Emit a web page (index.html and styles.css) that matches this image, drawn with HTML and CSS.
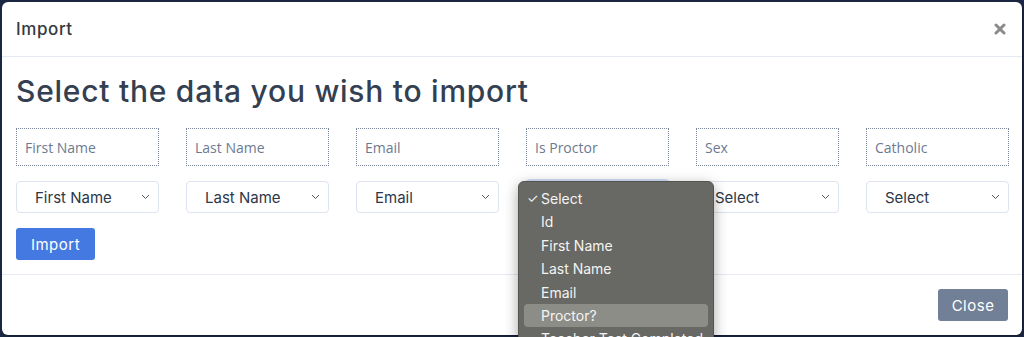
FILE: index.html
```html
<!DOCTYPE html>
<html lang="en">
<head>
    <meta charset="UTF-8">
    <meta name="viewport" content="width=device-width, initial-scale=1.0">
    <title>Import</title>
    <link rel="stylesheet" href="styles.css">
</head>
<body>
    <div class="modal">
        <div class="modal-header">
            <h5 class="modal-title">Import</h5>
            <button class="btn-close" aria-label="Close">
                <svg width="12" height="12" viewBox="0 0 12 12"><path d="M2 2 L10 10 M10 2 L2 10" stroke="#8a8a8a" stroke-width="3" stroke-linecap="round"/></svg>
            </button>
        </div>

        <div class="modal-body">
            <h2 class="title">Select the data you wish to import</h2>

            <div class="mapping">
                <input class="field" type="text" placeholder="First Name">
                <input class="field" type="text" placeholder="Last Name">
                <input class="field" type="text" placeholder="Email">
                <input class="field" type="text" placeholder="Is Proctor">
                <input class="field" type="text" placeholder="Sex">
                <input class="field" type="text" placeholder="Catholic">

                <div class="select"><span>First Name</span><svg class="chev" width="9" height="6" viewBox="0 0 9 6"><path d="M1 1 L4.5 4.5 L8 1" fill="none" stroke="#555" stroke-width="1"/></svg></div>
                <div class="select"><span>Last Name</span><svg class="chev" width="9" height="6" viewBox="0 0 9 6"><path d="M1 1 L4.5 4.5 L8 1" fill="none" stroke="#555" stroke-width="1"/></svg></div>
                <div class="select"><span>Email</span><svg class="chev" width="9" height="6" viewBox="0 0 9 6"><path d="M1 1 L4.5 4.5 L8 1" fill="none" stroke="#555" stroke-width="1"/></svg></div>
                <div class="select focused"><span>Select</span><svg class="chev" width="9" height="6" viewBox="0 0 9 6"><path d="M1 1 L4.5 4.5 L8 1" fill="none" stroke="#555" stroke-width="1"/></svg></div>
                <div class="select"><span>Select</span><svg class="chev" width="9" height="6" viewBox="0 0 9 6"><path d="M1 1 L4.5 4.5 L8 1" fill="none" stroke="#555" stroke-width="1"/></svg></div>
                <div class="select"><span>Select</span><svg class="chev" width="9" height="6" viewBox="0 0 9 6"><path d="M1 1 L4.5 4.5 L8 1" fill="none" stroke="#555" stroke-width="1"/></svg></div>
            </div>

            <button class="btn btn-primary">Import</button>
        </div>

        <div class="modal-footer">
            <button class="btn btn-secondary">Close</button>
        </div>

        <!-- menu aberto do select "Is Proctor" -->
        <ul class="dropdown">
            <li class="checked"><span class="check">✓</span>Select</li>
            <li>Id</li>
            <li>First Name</li>
            <li>Last Name</li>
            <li>Email</li>
            <li class="hover">Proctor?</li>
            <li>Teacher Test Completed</li>
        </ul>
    </div>
</body>
</html>
```

FILE: styles.css
```css
* {
    margin: 0;
    padding: 0;
    box-sizing: border-box;
}

body {
    background: #1c2843;
    height: 337px;
    overflow: hidden;
    padding: 2px 2px 0 2px;
    font-family: Inter, sans-serif;
    color: #2d3748;
}

/* Modal */
.modal {
    position: relative;
    background: #fff;
    border-radius: 6px;
    height: 333px;
    display: flex;
    flex-direction: column;
    box-shadow: 1px 1px 3px rgba(0, 0, 0, 0.4);
}

.modal-header {
    height: 55px;
    padding: 0 14px;
    display: flex;
    align-items: center;
    justify-content: space-between;
    border-bottom: 1px solid #e4e9f2;
}

.modal-title {
    font-size: 17px;
    font-weight: 500;
    letter-spacing: 0.6px;
    color: #343a40;
}

.btn-close {
    background: none;
    border: none;
    width: 12px;
    height: 12px;
    margin-right: 2px;
    display: flex;
}

/* Body */
.modal-body {
    padding: 16px 13px 14px 14px;
    border-bottom: 1px solid #e4e9f2;
}

.title {
    font-size: 30px;
    font-weight: 500;
    line-height: 36px;
    color: #343f52;
    letter-spacing: 0.75px;
    margin-bottom: 19px;
}

.mapping {
    display: grid;
    grid-template-columns: repeat(6, 143px);
    column-gap: 27px;
    row-gap: 15px;
    margin-bottom: 15px;
}

.field {
    height: 38px;
    border: 1px dotted #7d889c;
    padding: 0 8px;
    font-family: "Open Sans", sans-serif;
    font-size: 14px;
    outline: none;
}

.field::placeholder {
    color: #6c7a91;
}

.select {
    height: 32px;
    border: 1px solid #dde4f0;
    border-radius: 4px;
    padding: 0 8px 0 18px;
    display: flex;
    align-items: center;
    justify-content: space-between;
    font-size: 15px;
    color: #2d3748;
}

.select.focused {
    border-color: #a9c0ee;
    box-shadow: 0 0 0 2px rgba(68, 121, 224, 0.25);
}

/* Buttons */
.btn {
    border: none;
    border-radius: 3px;
    font-family: Inter, sans-serif;
    font-size: 15px;
    letter-spacing: 0.5px;
    color: #fff;
    height: 32px;
    cursor: pointer;
}

.btn-primary {
    background: #4479e1;
    width: 79px;
}

.btn-secondary {
    background: #718096;
    width: 70px;
}

.modal-footer {
    flex: 1;
    display: flex;
    justify-content: flex-end;
    align-items: flex-start;
    padding: 14px 14px 0 0;
}

/* Dropdown do sistema */
.dropdown {
    position: absolute;
    left: 516px;
    top: 179px;
    width: 196px;
    height: 170px;
    list-style: none;
    background: #686864;
    border: 1px solid #55554f;
    border-radius: 6px;
    padding: 5px 5px;
    box-shadow: 0 4px 14px rgba(0, 0, 0, 0.35);
    font-family: Inter, "Liberation Sans", sans-serif;
    font-size: 14px;
    color: #f4f4f2;
}

.dropdown li {
    height: 23.4px;
    line-height: 23.4px;
    padding-left: 17px;
    border-radius: 4px;
    position: relative;
    white-space: nowrap;
}

.dropdown .check {
    position: absolute;
    left: 3px;
    font-size: 13px;
}

.dropdown .hover {
    background: #8d8d88;
}
```
